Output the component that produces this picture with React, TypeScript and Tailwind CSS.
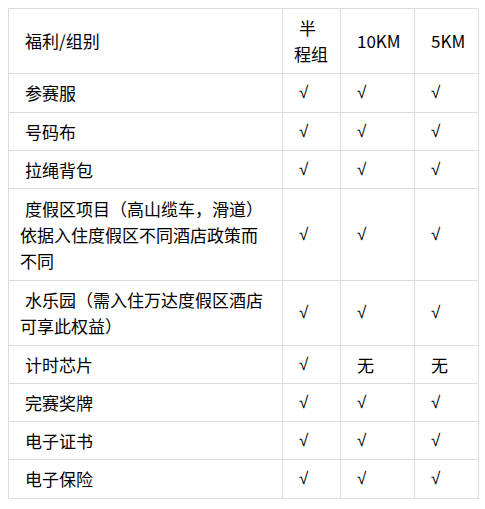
type Row = { name: string; marks: [string, string, string]; pad: string }

const rows: Row[] = [
  { name: '参赛服', marks: ['√', '√', '√'], pad: 'py-[6px]' },
  { name: '号码布', marks: ['√', '√', '√'], pad: 'py-[5.5px]' },
  { name: '拉绳背包', marks: ['√', '√', '√'], pad: 'py-[5.5px]' },
  {
    name: '度假区项目（高山缆车，滑道）依据入住度假区不同酒店政策而不同',
    marks: ['√', '√', '√'],
    pad: 'py-[6.5px]',
  },
  { name: '水乐园（需入住万达度假区酒店可享此权益）', marks: ['√', '√', '√'], pad: 'py-[6px]' },
  { name: '计时芯片', marks: ['√', '无', '无'], pad: 'py-[5.5px]' },
  { name: '完赛奖牌', marks: ['√', '√', '√'], pad: 'py-[5.5px]' },
  { name: '电子证书', marks: ['√', '√', '√'], pad: 'py-[5.5px]' },
  { name: '电子保险', marks: ['√', '√', '√'], pad: 'py-[6px]' },
]

const cell = 'border border-[#dddddd] px-[11px] indent-[5px] align-middle text-left font-normal'
const check = "[font-family:'Liberation_Sans',sans-serif]"

export default function App() {
  return (
    <div className="min-h-screen bg-white p-2 text-[17px] leading-[26px] text-black [font-family:'Noto_Sans_CJK_SC','Noto_Sans',sans-serif]">
      <table className="w-[470px] table-fixed border-collapse">
        <colgroup>
          <col className="w-[274px]" />
          <col className="w-[58px]" />
          <col className="w-[74px]" />
          <col className="w-[64px]" />
        </colgroup>
        <thead>
          <tr>
            <th className={`${cell} py-[6px]`}>福利/组别</th>
            <th className={`${cell} py-[6px]`}>半程组</th>
            <th className={`${cell} py-[6px]`}>10KM</th>
            <th className={`${cell} py-[6px]`}>5KM</th>
          </tr>
        </thead>
        <tbody>
          {rows.map((r) => (
            <tr key={r.name}>
              <td className={`${cell} ${r.pad}`}>{r.name}</td>
              {r.marks.map((v, i) => (
                <td key={i} className={`${cell} ${r.pad} ${v === '√' ? check : ''}`}>
                  {v}
                </td>
              ))}
            </tr>
          ))}
        </tbody>
      </table>
    </div>
  )
}
